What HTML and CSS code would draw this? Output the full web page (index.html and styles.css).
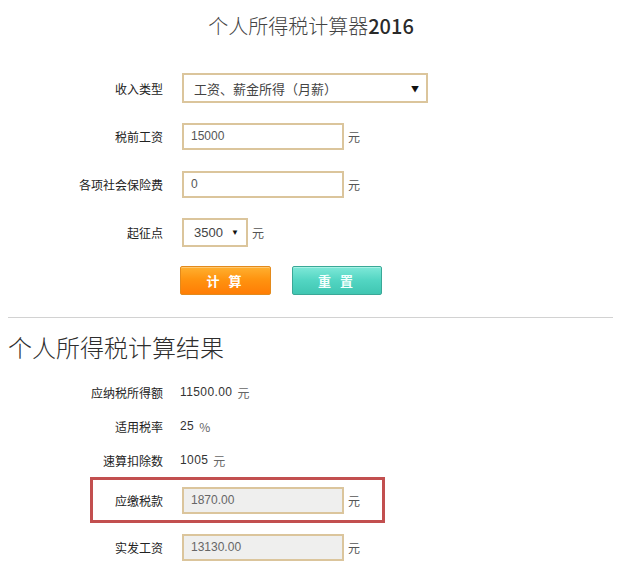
FILE: index.html
```html
<!DOCTYPE html>
<html lang="zh-CN">
<head>
<meta charset="utf-8">
<title>个人所得税计算器2016</title>
<link rel="stylesheet" href="styles.css">
</head>
<body>
<div class="page">
  <h1 class="title">个人所得税计算器<span class="year">2016</span></h1>
  <div class="form">
    <div class="row">
      <div class="label">收入类型</div>
      <div class="field select wide"><span>工资、薪金所得（月薪）</span><span class="arrow">▼</span></div>
    </div>
    <div class="row">
      <div class="label">税前工资</div>
      <div class="field input">15000</div>
      <span class="unit">元</span>
    </div>
    <div class="row">
      <div class="label">各项社会保险费</div>
      <div class="field input">0</div>
      <span class="unit">元</span>
    </div>
    <div class="row">
      <div class="label">起征点</div>
      <div class="field select small"><span>3500</span><span class="arrow">▼</span></div>
      <span class="unit">元</span>
    </div>
    <div class="row buttons">
      <div class="label"></div>
      <button class="btn btn-calc">计 算</button>
      <button class="btn btn-reset">重 置</button>
    </div>
  </div>
  <hr class="sep">
  <h2 class="subtitle">个人所得税计算结果</h2>
  <div class="results">
    <div class="rrow">
      <div class="label">应纳税所得额</div>
      <span class="value">11500.00</span><span class="unit">元</span>
    </div>
    <div class="rrow">
      <div class="label">适用税率</div>
      <span class="value">25</span><span class="unit">%</span>
    </div>
    <div class="rrow">
      <div class="label">速算扣除数</div>
      <span class="value">1005</span><span class="unit">元</span>
    </div>
    <div class="row hl">
      <span class="mark"></span>
      <div class="label">应缴税款</div>
      <div class="field input readonly">1870.00</div>
      <span class="unit">元</span>
    </div>
    <div class="row last">
      <div class="label">实发工资</div>
      <div class="field input readonly">13130.00</div>
      <span class="unit">元</span>
    </div>
  </div>
</div>
</body>
</html>
```

FILE: styles.css
```css
html, body {
  margin: 0;
  padding: 0;
  background: #ffffff;
}
body {
  font-family: "Liberation Sans", "Noto Sans CJK SC", sans-serif;
  color: #333333;
}
.page {
  width: 627px;
  padding: 0 8px;
  box-sizing: border-box;
}
.title {
  margin: 0;
  padding-top: 11px;
  padding-right: 5px;
  height: 30px;
  line-height: 30px;
  font-size: 20px;
  font-weight: 300;
  text-align: center;
  color: #444444;
  font-family: "Noto Sans CJK SC", "Liberation Sans", sans-serif;
}
.year {
  font-weight: 500;
  color: #2a2a2a;
}
.form {
  margin-top: 23px;
}
.row {
  display: flex;
  align-items: center;
  height: 48px;
}
.label {
  width: 155px;
  flex: none;
  margin-right: 19px;
  text-align: right;
  font-size: 12px;
  color: #222222;
  font-family: "Noto Sans CJK SC", sans-serif;
}
.field {
  box-sizing: border-box;
  border: 2px solid #dbc59c;
  background: #ffffff;
  font-size: 12px;
  color: #555555;
  display: flex;
  align-items: center;
  font-family: "Liberation Sans", "Noto Sans CJK SC", sans-serif;
}
.input {
  width: 162px;
  height: 27px;
  padding-left: 7px;
}
.readonly {
  background: #efefee;
  color: #666666;
}
.select {
  height: 30px;
  justify-content: space-between;
  padding: 0 7px 0 10px;
}
.select.wide {
  width: 246px;
  font-size: 13px;
  color: #444444;
  font-family: "Noto Sans CJK SC", sans-serif;
}
.select.small {
  width: 66px;
  height: 29px;
  padding-left: 10px;
  font-size: 13px;
  color: #444444;
}
.arrow {
  font-size: 8px;
  color: #111111;
}
.unit {
  margin-left: 4px;
  font-size: 12px;
  color: #555555;
  font-family: "Noto Sans CJK SC", sans-serif;
}
.buttons .label {
  width: 153px;
}
.btn {
  box-sizing: border-box;
  height: 29px;
  border-radius: 2px;
  font-size: 13px;
  font-weight: bold;
  color: #ffffff;
  letter-spacing: 3px;
  font-family: "Noto Sans CJK SC", sans-serif;
  padding: 0;
  cursor: pointer;
}
.btn-calc {
  width: 91px;
  border: 1px solid #e38a1c;
  background: linear-gradient(#ffb030 0%, #ff9410 45%, #ff7d05 100%);
  box-shadow: inset 0 1px 0 #ffc870;
}
.btn-reset {
  width: 90px;
  margin-left: 21px;
  border: 1px solid #3aa897;
  background: linear-gradient(#7ee8d8 0%, #52d5c2 50%, #40c6b2 100%);
  box-shadow: inset 0 1px 0 #a8f2e6;
  color: #f4fffd;
}
.sep {
  margin: 13px 6px 0 0;
  border: 0;
  border-top: 1px solid #d2d2d2;
  height: 0;
}
.subtitle {
  margin: 14px 0 0 0;
  height: 30px;
  line-height: 30px;
  font-size: 24px;
  font-weight: 300;
  color: #2e2e2e;
  font-family: "Noto Sans CJK SC", sans-serif;
}
.results {
  margin-top: 13px;
}
.rrow {
  display: flex;
  align-items: center;
  height: 34px;
}
.rrow .label {
  margin-right: 17px;
}
.value {
  font-size: 12px;
  color: #333333;
  letter-spacing: 0.4px;
}
.rrow .unit {
  margin-left: 5px;
  color: #666666;
}
.hl {
  position: relative;
  height: 46px;
}
.mark {
  position: absolute;
  left: 82px;
  top: 0;
  width: 295px;
  height: 46px;
  box-sizing: border-box;
  border: 3px solid #c24f4f;
  pointer-events: none;
}
.last {
  height: 48px;
}
```
